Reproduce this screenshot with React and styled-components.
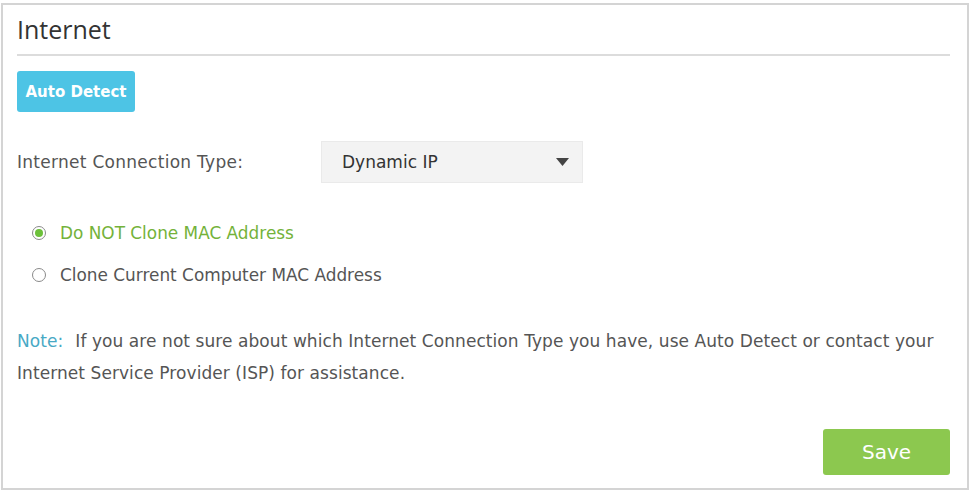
import React, { useState } from "react";
import styled, { createGlobalStyle } from "styled-components";

const Global = createGlobalStyle`
  html, body { margin: 0; padding: 0; background: #fff; }
  body { font-family: "DejaVu Sans", Tahoma, sans-serif; }
`;

const Panel = styled.div`
  box-sizing: border-box;
  margin: 3px 0 0 1px;
  width: 968px;
  height: 487px;
  border: 2px solid #d4d4d4;
  padding: 0 17px 0 14px;
  display: flex;
  flex-direction: column;
`;

const Title = styled.h2`
  margin: 0;
  font-family: "Open Sans", "Noto Sans", sans-serif;
  font-weight: 400;
  font-size: 25px;
  color: #333;
  height: 49px;
  line-height: 49px;
  border-bottom: 2px solid #dcdcdc;
`;

const Button = styled.button`
  box-sizing: border-box;
  border: none;
  border-radius: 3px;
  color: #fff;
  font-family: "DejaVu Sans", Tahoma, sans-serif;
  background: ${(p) => p.$bg};
  width: ${(p) => p.$w}px;
  height: ${(p) => p.$h}px;
  font-size: ${(p) => p.$fs}px;
  font-weight: ${(p) => p.$fw};
  padding: 0;
  cursor: pointer;
`;

const DetectWrap = styled.div`
  margin-top: 15px;
  display: flex;
`;

const Row = styled.div`
  display: flex;
  align-items: center;
  margin-top: 29px;
`;

const Label = styled.span`
  width: 304px;
  font-size: 17px;
  letter-spacing: 0.28px;
  color: #555;
`;

const Select = styled.div`
  box-sizing: border-box;
  width: 262px;
  height: 42px;
  background: #f3f3f3;
  border: 1px solid #eaeaea;
  display: flex;
  align-items: center;
  justify-content: space-between;
  padding: 0 13px 0 20px;
  font-size: 17px;
  color: #333;
`;

const Radios = styled.div`
  margin-top: 39px;
  padding-left: 15px;
  display: flex;
  flex-direction: column;
  gap: 20px;
`;

const RadioRow = styled.label`
  display: flex;
  align-items: center;
  height: 22px;
  line-height: 22px;
  font-size: 16.9px;
  color: ${(p) => (p.$on ? "#74b23a" : "#555")};
  cursor: pointer;
`;

const Circle = styled.span`
  box-sizing: border-box;
  width: 14px;
  height: 14px;
  border-radius: 50%;
  border: 1px solid #8a8a8a;
  background: #fff;
  margin-right: 14px;
  display: flex;
  align-items: center;
  justify-content: center;
  &::after {
    content: "";
    width: 8px;
    height: 8px;
    border-radius: 50%;
    background: ${(p) => (p.$on ? "#6cc03a" : "transparent")};
  }
`;

const Note = styled.p`
  margin: 39px 0 0 0;
  font-size: 17px;
  letter-spacing: 0.07px;
  line-height: 32px;
  color: #555;
`;

const NoteTag = styled.span`
  color: #48a9c5;
  margin-right: 12px;
`;

const Footer = styled.div`
  margin-top: auto;
  margin-bottom: 13px;
  display: flex;
  justify-content: flex-end;
`;

export default function App() {
  const [clone, setClone] = useState(false);
  return (
    <>
      <Global />
      <Panel>
        <Title>Internet</Title>
        <DetectWrap>
          <Button $bg="#4dc4e5" $w={118} $h={41} $fs={15} $fw={700}>
            Auto Detect
          </Button>
        </DetectWrap>
        <Row>
          <Label>Internet Connection Type:</Label>
          <Select>
            <span>Dynamic IP</span>
            <svg width="13" height="8" viewBox="0 0 13 8">
              <path d="M0 0 H13 L6.5 8 Z" fill="#444" />
            </svg>
          </Select>
        </Row>
        <Radios>
          <RadioRow $on={!clone} onClick={() => setClone(false)}>
            <Circle $on={!clone} />
            Do NOT Clone MAC Address
          </RadioRow>
          <RadioRow $on={clone} onClick={() => setClone(true)}>
            <Circle $on={clone} />
            Clone Current Computer MAC Address
          </RadioRow>
        </Radios>
        <Note>
          <NoteTag>Note:</NoteTag>If you are not sure about which Internet Connection Type you have, use Auto Detect or contact your Internet Service Provider (ISP) for assistance.
        </Note>
        <Footer>
          <Button $bg="#8cc84f" $w={127} $h={46} $fs={20} $fw={400}>
            Save
          </Button>
        </Footer>
      </Panel>
    </>
  );
}
